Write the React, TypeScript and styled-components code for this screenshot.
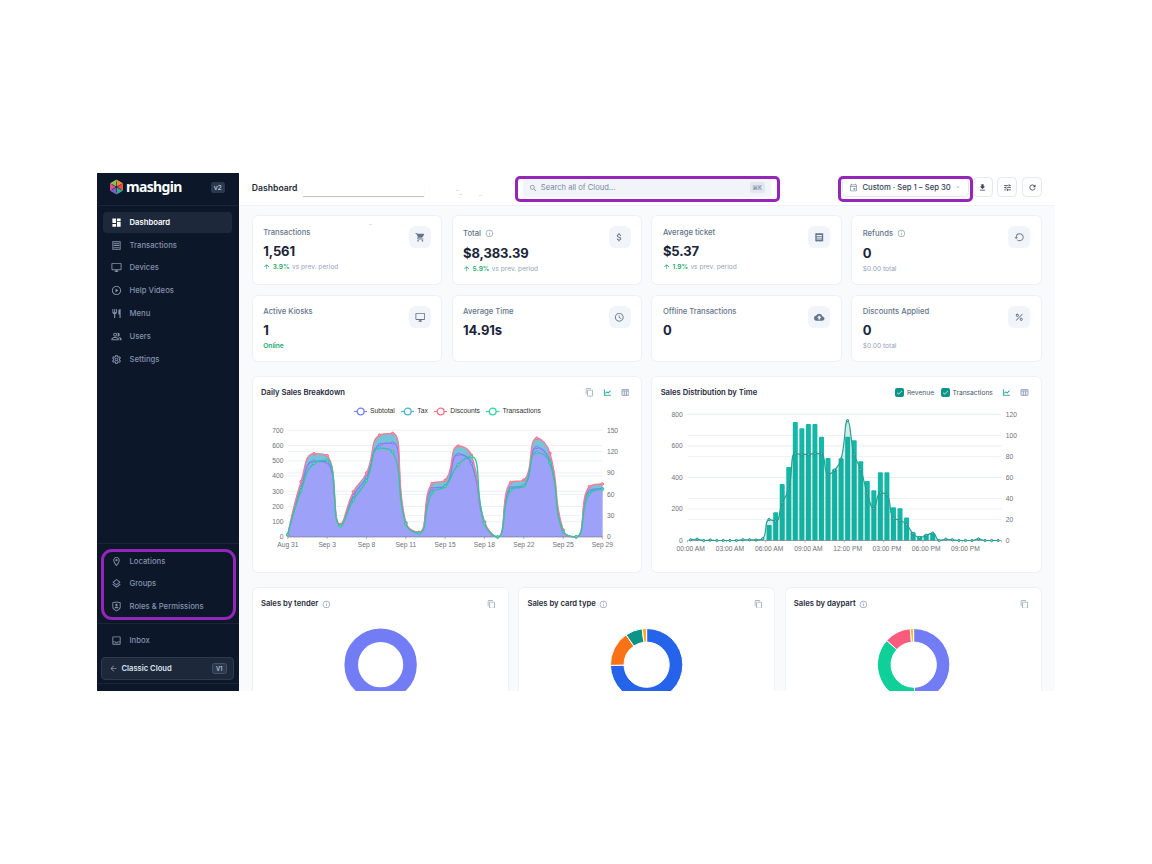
import React from "react";
import styled, { createGlobalStyle, css } from "styled-components";
import {
  MdAccessTime,
  MdArrowBack,
  MdArrowUpward,
  MdAttachMoney,
  MdCheck,
  MdCloudUpload,
  MdContentCopy,
  MdDashboard,
  MdDownload,
  MdExpandMore,
  MdInfoOutline,
  MdOutlineDesktopWindows,
  MdOutlineEvent,
  MdOutlineInbox,
  MdOutlineLayers,
  MdOutlineLocationOn,
  MdOutlinePeopleAlt,
  MdOutlineReceipt,
  MdOutlineSettings,
  MdPercent,
  MdPlayCircleOutline,
  MdReceipt,
  MdRefresh,
  MdRestaurant,
  MdSearch,
  MdShoppingCart,
  MdTune,
} from "react-icons/md";
import { RiShieldUserLine } from "react-icons/ri";
import { AiOutlineLineChart } from "react-icons/ai";

const GlobalStyle = createGlobalStyle`
  * { box-sizing: border-box; }
  body {
    margin: 0;
    background: #fff;
    font-family: Inter, "Liberation Sans", sans-serif;
    color: #1e293b;
  }
`;

const Page = styled.div`
  width: 1152px;
  height: 864px;
  padding: 173px 97px;
  overflow: hidden;
`;

const Window = styled.div`
  position: relative;
  display: flex;
  width: 958px;
  height: 518px;
  overflow: hidden;
  background: #f8fafc;
`;

/* ---------- sidebar ---------- */

const Sidebar = styled.aside`
  flex: none;
  display: flex;
  flex-direction: column;
  width: 141.5px;
  background: #0d172a;
  color: #8493aa;
`;

const Brand = styled.div`
  display: flex;
  align-items: center;
  height: 32.5px;
  padding: 0 13.5px 3.5px 12px;
  border-bottom: 1px solid #1a2538;
`;

const Wordmark = styled.span`
  flex: 1;
  margin-left: 2px;
  font: 700 14px/16px "Noto Sans", "Open Sans", sans-serif;
  letter-spacing: -0.65px;
  color: #fff;
`;

const VersionTag = styled.span<{ $small?: boolean }>`
  display: grid;
  place-items: center;
  width: 14.5px;
  height: 11px;
  border-radius: 2.5px;
  background: #2b394e;
  color: #b3c0d1;
  font-size: 6.8px;
  font-weight: 600;
  ${(p) =>
    p.$small &&
    css`
      border: 0.5px solid #42506a;
      font-size: 5.8px;
    `}
`;

const NavGroup = styled.nav<{ $top: number; $line?: boolean; $gap?: number; $bottom?: number }>`
  display: flex;
  flex-direction: column;
  gap: ${(p) => p.$gap ?? 2.3}px;
  padding: ${(p) => p.$top}px 7px ${(p) => p.$bottom ?? 0}px 6px;
  ${(p) => p.$line && "border-top: 1px solid #1a2538;"}
`;

const NavItem = styled.a<{ $active?: boolean }>`
  display: flex;
  align-items: center;
  gap: 7.5px;
  height: 20.5px;
  padding-left: 8px;
  border-radius: 4px;
  font-size: 7.7px;
  font-weight: ${(p) => (p.$active ? 600 : 500)};
  color: ${(p) => (p.$active ? "#fff" : "inherit")};
  background: ${(p) => (p.$active ? "#1d293b" : "transparent")};
  svg { width: 11px; height: 11px; }
`;

const Spacer = styled.div`
  flex: 1;
`;

const ClassicButton = styled.div`
  display: flex;
  align-items: center;
  height: 23px;
  margin: 6.3px 4.5px 2.5px 4px;
  padding: 0 6.5px 0 7px;
  border: 1px solid #2d3a4f;
  border-radius: 4px;
  background: #1d293b;
  font-size: 7.6px;
  font-weight: 600;
  color: #dbe3ec;
  svg { flex: none; width: 9px; height: 9px; color: #8493aa; margin-right: 3.5px; }
  span { margin-left: auto; }
`;

const SidebarFoot = styled.div`
  height: 8.5px;
  border-top: 1px solid #1a2538;
`;

/* ---------- top bar ---------- */

const Main = styled.main`
  flex: 1;
  min-width: 0;
`;

const TopBar = styled.header`
  display: flex;
  align-items: center;
  height: 33px;
  padding: 0 13px 3.5px 13.3px;
  background: #fff;
  border-bottom: 1px solid #eff2f6;
`;

const PageTitle = styled.h1`
  margin: 1px 0 0;
  width: 51.2px;
  font-size: 8.65px;
  line-height: 12px;
  font-weight: 600;
`;

const LocationField = styled.div`
  width: 121px;
  height: 13px;
  margin: 6px 99px 0 0;
  background: #fff;
  border-bottom: 1px solid #c4c4c4;
  box-shadow: 0 0 1px #ddd;
  clip-path: inset(2px -1px -1px -1px);
`;

const SearchBox = styled.div`
  display: flex;
  align-items: center;
  width: 248px;
  height: 20px;
  margin-right: 71px;
  padding: 1px 6px 0;
  border-radius: 4px;
  background: #f1f5f9;
  color: #7a899e;
  font-size: 7.6px;
  svg { width: 8.5px; height: 8.5px; margin-right: 3.5px; }
`;

const Shortcut = styled.kbd`
  display: grid;
  place-items: center;
  width: 15px;
  height: 11px;
  margin-left: auto;
  border-radius: 2.5px;
  background: #e0e7ef;
  font: 500 5.8px Inter, sans-serif;
`;

const DateButton = styled.div`
  display: flex;
  align-items: center;
  width: 127px;
  height: 20px;
  margin-right: 4.2px;
  padding: 0 6.5px;
  border: 1px solid #e2e8f0;
  border-radius: 4.5px;
  font-size: 7.7px;
  font-weight: 500;
  white-space: nowrap;
  color: #334155;
  svg { flex: none; width: 9px; height: 9px; margin-right: 4.3px; color: #8493aa; }
  svg:last-child { width: 6px; height: 6px; margin: 0 0 0 4px; }
`;

const IconButton = styled.button`
  display: grid;
  place-items: center;
  width: 20px;
  height: 20px;
  margin-right: 4.7px;
  padding: 0;
  border: 1px solid #e2e8f0;
  border-radius: 4.5px;
  background: #fff;
  color: #334155;
  &:last-child { margin-right: 0; }
  svg { width: 9px; height: 9px; }
`;

/* ---------- cards ---------- */

const Content = styled.div`
  padding: 9px 13.4px 0 13.2px;
`;

const Grid = styled.section<{ $cols: number; $rows: string; $bottom: number }>`
  display: grid;
  grid-template-columns: repeat(${(p) => p.$cols}, 1fr);
  grid-template-rows: ${(p) => p.$rows};
  gap: 9.4px;
  margin-bottom: ${(p) => p.$bottom}px;
`;

const Card = styled.article`
  min-width: 0;
  border-radius: 6px;
  background: #fff;
  box-shadow: inset 0 0 0 1px #edf1f6;
`;

const StatCard = styled(Card)`
  display: flex;
  justify-content: space-between;
  padding: 11px 11.3px 0 11.6px;
`;

const StatLabel = styled.div<{ $tall?: boolean }>`
  display: flex;
  align-items: center;
  gap: 4px;
  height: ${(p) => (p.$tall ? 14 : 12)}px;
  font-size: 7.65px;
  font-weight: 500;
  color: #64748b;
  svg { width: 8.8px; height: 8.8px; color: #94a3b8; }
`;

const StatValue = styled.div`
  height: 19px;
  margin-top: 3.7px;
  font-size: 13px;
  line-height: 19px;
  font-weight: 700;
  letter-spacing: -0.12px;
  color: #1b2438;
`;

const StatNote = styled.div<{ $good?: boolean }>`
  display: flex;
  align-items: center;
  height: 12px;
  font-size: 6.6px;
  font-weight: ${(p) => (p.$good ? 600 : 400)};
  color: ${(p) => (p.$good ? "#22a86b" : "#94a3b8")};
  svg { width: 7.5px; height: 7.5px; margin-right: 2px; color: #22a86b; }
  b { font-weight: 600; margin-right: 2.3px; color: #22a86b; }
`;

const StatIcon = styled.div`
  display: grid;
  place-items: center;
  width: 22px;
  height: 22px;
  border-radius: 6px;
  background: #f1f5f9;
  color: #64748b;
  svg { width: 10.5px; height: 10.5px; }
`;

const CardHead = styled.div<{ $gap?: number }>`
  display: flex;
  align-items: center;
  height: 14px;
  margin: 9.8px 12.5px ${(p) => p.$gap ?? 0}px 9.3px;
`;

const CardTitle = styled.h2`
  display: flex;
  align-items: center;
  gap: 3.5px;
  margin: 0 auto 0 0;
  font-size: 7.67px;
  font-weight: 600;
  color: #1e293b;
  svg { width: 8.8px; height: 8.8px; color: #94a3b8; }
`;

const HeadIcon = styled.span<{ $on?: boolean; $left?: number }>`
  display: flex;
  margin-left: ${(p) => p.$left ?? 9}px;
  color: ${(p) => (p.$on ? "#0d9488" : "#94a3b8")};
  svg { width: 8.9px; height: 8.9px; }
  ${(p) => p.$on && "path { stroke: #0d9488; stroke-width: 26; }"}
`;

const Toggle = styled.label`
  display: flex;
  align-items: center;
  gap: 3px;
  margin-right: 6.5px;
  font-size: 6.65px;
  color: #475569;
`;

const CheckBox = styled.span`
  display: grid;
  place-items: center;
  width: 9px;
  height: 9px;
  border-radius: 2px;
  background: #0d9488;
  color: #fff;
  svg { width: 7px; height: 7px; }
`;

const Legend = styled.div`
  display: flex;
  justify-content: center;
  gap: 6.3px;
  height: 12px;
  margin: 5.6px 0 5px;
  padding-left: 1px;
  font: 6.75px/12px "Liberation Sans", sans-serif;
  color: #333;
`;

const LegendItem = styled.span`
  display: flex;
  align-items: center;
  gap: 2.8px;
`;

const Plot = styled.svg`
  display: block;
  width: 100%;
  overflow: visible;
  text {
    font: 6.7px "Liberation Sans", sans-serif;
    fill: #6e7079;
  }
`;

/* ---------- annotation marks ---------- */

const Highlight = styled.div<{ $x: number; $y: number; $w: number; $h: number; $r: number }>`
  position: absolute;
  left: ${(p) => p.$x}px;
  top: ${(p) => p.$y}px;
  width: ${(p) => p.$w}px;
  height: ${(p) => p.$h}px;
  border: 3px solid #9427b9;
  border-radius: ${(p) => p.$r}px;
`;

const Speck = styled.i<{ $x: number; $y: number }>`
  position: absolute;
  left: ${(p) => p.$x}px;
  top: ${(p) => p.$y}px;
  width: 2.5px;
  height: 1px;
  background: #e2e2e2;
`;

/* ---------- chart helpers ---------- */

type Pt = [number, number];

/** Cubic smoothing whose control points never overshoot the neighbouring points. */
function smoothPath(pts: Pt[], smooth = 0.5): string {
  const between = (v: number, a: number, b: number) =>
    Math.max(Math.min(a, b), Math.min(Math.max(a, b), v));
  let d = `M${pts[0][0]} ${pts[0][1]}`;
  let c0: Pt = pts[0];
  for (let i = 1; i < pts.length; i++) {
    const prev = pts[i - 1];
    const cur = pts[i];
    const next = pts[i + 1];
    let c1: Pt = cur;
    let nextC: Pt = cur;
    if (next) {
      const lp = Math.hypot(cur[0] - prev[0], cur[1] - prev[1]);
      const ln = Math.hypot(next[0] - cur[0], next[1] - cur[1]);
      const vx = next[0] - prev[0];
      const vy = next[1] - prev[1];
      const r = ln / (ln + lp);
      const nx = between(cur[0] + vx * smooth * r, cur[0], next[0]);
      const ny = between(cur[1] + vy * smooth * r, cur[1], next[1]);
      c1 = [
        between(cur[0] - ((nx - cur[0]) * lp) / ln, prev[0], cur[0]),
        between(cur[1] - ((ny - cur[1]) * lp) / ln, prev[1], cur[1]),
      ];
      nextC = [cur[0] + ((cur[0] - c1[0]) * ln) / lp, cur[1] + ((cur[1] - c1[1]) * ln) / lp];
    }
    d += `C${c0[0].toFixed(2)} ${c0[1].toFixed(2)} ${c1[0].toFixed(2)} ${c1[1].toFixed(2)} ${cur[0].toFixed(2)} ${cur[1].toFixed(2)}`;
    c0 = nextC;
  }
  return d;
}

const DAILY = {
  total: [12, 363, 547, 534, 82, 297, 420, 669, 680, 96, 31, 350, 372, 597, 538, 101, 0, 357, 374, 648, 549, 46, 0, 330, 348],
  subtotal: [11, 326, 497, 488, 77, 271, 392, 606, 617, 90, 28, 317, 335, 543, 484, 94, 0, 322, 337, 588, 499, 42, 0, 302, 317],
  count: [4, 65, 103.5, 108, 15.5, 52, 79, 125, 119.5, 18.5, 5.6, 62, 71, 102, 113, 18.8, 0, 66, 72, 119, 104, 7.5, 0.5, 60.5, 67],
};
const DAYS = ["Aug 31", "Sep 3", "Sep 8", "Sep 11", "Sep 15", "Sep 18", "Sep 22", "Sep 25", "Sep 29"];

function DailyChart() {
  const L = 35.7, R = 350.3, T = 8.3, B = 115;
  const step = (R - L) / 24;
  const toPts = (vals: number[], max: number): Pt[] =>
    vals.map((v, i) => [L + i * step, B - (v / max) * (B - T)]);
  const total = toPts(DAILY.total, 700);
  const sub = toPts(DAILY.subtotal, 700);
  const count = toPts(DAILY.count, 150);
  const totalD = smoothPath(total);
  const subD = smoothPath(sub);
  const close = `L${R} ${B}L${L} ${B}Z`;
  const dots = (pts: Pt[], color: string, fill: string) =>
    pts.map(([x, y], i) => <circle key={i} cx={x} cy={y} r={1.25} fill={fill} stroke={color} strokeWidth={1} />);
  return (
    <Plot viewBox="0 0 390 130" height={130}>
      {[1, 2, 3, 4, 5, 6, 7].map((n) => (
        <line key={n} x1={L} x2={R} y1={B - ((B - T) * n) / 7} y2={B - ((B - T) * n) / 7} stroke="#e6ebf4" strokeWidth={0.8} />
      ))}
      {[1, 2, 3, 4].map((n) => (
        <line key={n} x1={L} x2={R} y1={B - ((B - T) * n) / 5} y2={B - ((B - T) * n) / 5} stroke="#e6ebf4" strokeWidth={0.8} />
      ))}
      <path d={totalD + close} fill="#79c3da" />
      <path d={subD + close} fill="#9da2f8" />
      <line x1={L} x2={R} y1={B} y2={B} stroke="#6e7079" strokeWidth={0.6} />
      {DAYS.map((_, i) => (
        <line key={i} x1={L + i * 3 * step} x2={L + i * 3 * step} y1={B} y2={B + 2} stroke="#6e7079" strokeWidth={0.5} />
      ))}
      <path d={subD} fill="none" stroke="#7a80f7" strokeWidth={1.3} />
      {dots(sub, "#7a80f7", "#a9adfa")}
      <path d={totalD} fill="none" stroke="#f47c94" strokeWidth={1.35} />
      {dots(total, "#f8718b", "#f99aad")}
      <path d={smoothPath(count)} fill="none" stroke="#2cc79f" strokeWidth={1.35} />
      {dots(count, "#24c99a", "#74dfc0")}
      {[0, 1, 2, 3, 4, 5, 6, 7].map((n) => (
        <text key={n} x={L - 4.3} y={B - ((B - T) * n) / 7 + 2.3} textAnchor="end">{n * 100}</text>
      ))}
      {[0, 1, 2, 3, 4, 5].map((n) => (
        <text key={n} x={R + 4.5} y={B - ((B - T) * n) / 5 + 2.3}>{n * 30}</text>
      ))}
      {DAYS.map((t, i) => (
        <text key={t} x={L + i * 3 * step} y={B + 10.3} textAnchor="middle">{t}</text>
      ))}
    </Plot>
  );
}

const REVENUE = [98, 180, 359, 467, 752, 712, 739, 739, 659, 524, 452, 520, 659, 636, 503, 378, 319, 433, 433, 211, 205, 146, 53, 28, 38, 46];
const TXNS = [
  0.7, 1.2, 0, 0.4, 0, 0, 0, 0, 0.7, 0.7, 0.4, 1.6, 20, 18.4, 36, 49, 83, 82, 82, 83, 82.5, 63, 67, 77.6, 114,
  81.6, 67.6, 45, 30.5, 45.4, 43.5, 21, 19.3, 15.2, 6.7, 2.9, 5, 7, 0, 1.2, 0.7, 0, 0, 0, 1.5, 0, 0, 0,
];
const HOURS = ["00:00 AM", "03:00 AM", "06:00 AM", "09:00 AM", "12:00 PM", "03:00 PM", "06:00 PM", "09:00 PM"];

function TimeChart() {
  const L = 36.2, R = 350.3, T = 9.4, B = 135.5;
  const band = (R - L) / 48;
  const cx = (i: number) => L + band * (i + 0.5);
  const pts: Pt[] = TXNS.map((v, i) => [cx(i), B - (v / 120) * (B - T)]);
  const d = smoothPath(pts);
  return (
    <Plot viewBox="0 0 390 150" height={150}>
      {[1, 2, 3, 4].map((n) => (
        <line key={n} x1={L} x2={R} y1={B - ((B - T) * n) / 4} y2={B - ((B - T) * n) / 4} stroke="#e4e9f1" strokeWidth={0.8} />
      ))}
      {[1, 2, 3, 4, 5].map((n) => (
        <line key={n} x1={L} x2={R} y1={B - ((B - T) * n) / 6} y2={B - ((B - T) * n) / 6} stroke="#e9edf6" strokeWidth={0.8} />
      ))}
      {REVENUE.map((v, i) => {
        const h = (v / 800) * (B - T);
        return (
          <path
            key={i}
            d={`M${cx(i + 12) - 2.5} ${B}v${-(h - 1)}q0 -1 1 -1h3q1 0 1 1v${h - 1}z`}
            fill="#14b8a6"
          />
        );
      })}
      <path d={`${d}L${cx(47)} ${B}L${cx(0)} ${B}Z`} fill="#0d9488" fillOpacity={0.18} />
      <line x1={L} x2={R} y1={B} y2={B} stroke="#6e7079" strokeWidth={0.6} />
      {[0, 6, 12, 18, 24, 30, 36, 42, 48].map((n) => (
        <line key={n} x1={L + n * band} x2={L + n * band} y1={B} y2={B + 2} stroke="#6e7079" strokeWidth={0.5} />
      ))}
      <path d={d} fill="none" stroke="#27a093" strokeWidth={1.2} />
      {pts.map(([x, y], i) => (
        <circle key={i} cx={x} cy={y} r={1.15} fill="#8fd3cb" stroke="#128f83" strokeWidth={0.9} />
      ))}
      {[0, 1, 2, 3, 4].map((n) => (
        <text key={n} x={L - 4.6} y={B - ((B - T) * n) / 4 + 2.3} textAnchor="end">{n * 200}</text>
      ))}
      {[0, 1, 2, 3, 4, 5, 6].map((n) => (
        <text key={n} x={R + 4.3} y={B - ((B - T) * n) / 6 + 2.3}>{n * 20}</text>
      ))}
      {HOURS.map((t, i) => (
        <text key={t} x={cx(i * 6)} y={B + 10} textAnchor="middle">{t}</text>
      ))}
    </Plot>
  );
}

type Slice = { from: number; to: number; color: string };

function Donut({ slices }: { slices: Slice[] }) {
  const cx = 128.6, cy = 53.7, r0 = 22.6, r1 = 36.2;
  const at = (r: number, deg: number) => {
    const a = (deg * Math.PI) / 180;
    return `${(cx + r * Math.sin(a)).toFixed(2)} ${(cy - r * Math.cos(a)).toFixed(2)}`;
  };
  return (
    <Plot viewBox="0 0 257 92" height={92}>
      {slices.length === 1 ? (
        <circle cx={cx} cy={cy} r={(r0 + r1) / 2} fill="none" stroke={slices[0].color} strokeWidth={r1 - r0} />
      ) : (
        slices.map((s) => {
          const big = s.to - s.from > 180 ? 1 : 0;
          return (
            <path
              key={s.color}
              d={`M${at(r1, s.from)}A${r1} ${r1} 0 ${big} 1 ${at(r1, s.to)}L${at(r0, s.to)}A${r0} ${r0} 0 ${big} 0 ${at(r0, s.from)}Z`}
              fill={s.color}
              stroke="#fff"
              strokeWidth={1}
              strokeLinejoin="round"
            />
          );
        })
      )}
    </Plot>
  );
}

function CubeLogo() {
  return (
    <svg width="15" height="16" viewBox="0 0 30 32">
      <path d="M15 1 28 8.5 15 16z" fill="#f0883a" />
      <path d="M15 1 2 8.5 15 16z" fill="#8cc152" />
      <path d="M2 8.5 2 23.5 15 16z" fill="#e0508f" />
      <path d="M28 8.5 28 23.5 15 16z" fill="#e9503f" />
      <path d="M2 23.5 15 31 15 16z" fill="#7d5fc4" />
      <path d="M28 23.5 15 31 15 16z" fill="#35a98f" />
      <path d="M15 16V6M15 16 6 11M15 16 24 11M15 16V26M15 16 6 21M15 16 24 21" stroke="#1d2a44" strokeWidth="1.1" />
      <circle cx="15" cy="16" r="2" fill="#1d2a44" />
    </svg>
  );
}

function TableIcon() {
  return (
    <svg viewBox="0 0 24 24" fill="none" stroke="currentColor" strokeWidth="2.4">
      <rect x="2.5" y="4" width="19" height="16" rx="1" fill="currentColor" fillOpacity="0.2" />
      <path d="M3 8h18M9 8v12M15 8v12" />
    </svg>
  );
}

function RefundIcon() {
  return (
    <svg viewBox="0 0 24 24" fill="currentColor">
      <path d="M13 3a9 9 0 0 0-9 9H1l4 4 4-4H6a7 7 0 1 1 2.06 4.94l-1.42 1.42A9 9 0 1 0 13 3z" />
    </svg>
  );
}

const NAV = [
  { label: "Dashboard", icon: <MdDashboard /> },
  { label: "Transactions", icon: <MdOutlineReceipt /> },
  { label: "Devices", icon: <MdOutlineDesktopWindows /> },
  { label: "Help Videos", icon: <MdPlayCircleOutline /> },
  { label: "Menu", icon: <MdRestaurant /> },
  { label: "Users", icon: <MdOutlinePeopleAlt /> },
  { label: "Settings", icon: <MdOutlineSettings /> },
];

const ADMIN = [
  { label: "Locations", icon: <MdOutlineLocationOn /> },
  { label: "Groups", icon: <MdOutlineLayers /> },
  { label: "Roles & Permissions", icon: <RiShieldUserLine /> },
];

type Stat = {
  label: string;
  value: string;
  icon: React.ReactNode;
  info?: boolean;
  change?: string;
  note?: string;
  good?: boolean;
};

const STATS: Stat[] = [
  { label: "Transactions", value: "1,561", change: "3.9%", icon: <MdShoppingCart /> },
  { label: "Total", value: "$8,383.39", change: "5.9%", info: true, icon: <MdAttachMoney /> },
  { label: "Average ticket", value: "$5.37", change: "1.9%", icon: <MdReceipt /> },
  { label: "Refunds", value: "0", note: "$0.00 total", info: true, icon: <RefundIcon /> },
  { label: "Active Kiosks", value: "1", note: "Online", good: true, icon: <MdOutlineDesktopWindows /> },
  { label: "Average Time", value: "14.91s", icon: <MdAccessTime /> },
  { label: "Offline Transactions", value: "0", icon: <MdCloudUpload /> },
  { label: "Discounts Applied", value: "0", note: "$0.00 total", icon: <MdPercent /> },
];

const LEGEND = [
  { label: "Subtotal", color: "#7a80f7" },
  { label: "Tax", color: "#4fb3d1" },
  { label: "Discounts", color: "#f8718b" },
  { label: "Transactions", color: "#2fd6a0" },
];

const DONUTS: { title: string; slices: Slice[] }[] = [
  { title: "Sales by tender", slices: [{ from: 0, to: 360, color: "#727cf5" }] },
  {
    title: "Sales by card type",
    slices: [
      { from: 0, to: 269, color: "#2563eb" },
      { from: 269, to: 325.5, color: "#f97316" },
      { from: 325.5, to: 353, color: "#0d9488" },
      { from: 353, to: 360, color: "#fbb024" },
    ],
  },
  {
    title: "Sales by daypart",
    slices: [
      { from: 0, to: 178, color: "#727cf5" },
      { from: 178, to: 312, color: "#10d09a" },
      { from: 312, to: 354.5, color: "#fb5b7c" },
      { from: 354.5, to: 360, color: "#fbc024" },
    ],
  },
];

export default function App() {
  return (
    <>
      <GlobalStyle />
      <Page>
        <Window>
          <Sidebar>
            <Brand>
              <CubeLogo />
              <Wordmark>mashgin</Wordmark>
              <VersionTag>v2</VersionTag>
            </Brand>
            <NavGroup $top={6.5}>
              {NAV.map((n, i) => (
                <NavItem key={n.label} $active={i === 0}>
                  {n.icon}
                  {n.label}
                </NavItem>
              ))}
            </NavGroup>
            <Spacer />
            <NavGroup $top={6.7} $bottom={6.3} $gap={2} $line>
              {ADMIN.map((n) => (
                <NavItem key={n.label}>
                  {n.icon}
                  {n.label}
                </NavItem>
              ))}
            </NavGroup>
            <NavGroup $top={6.5} $line>
              <NavItem>
                <MdOutlineInbox />
                Inbox
              </NavItem>
            </NavGroup>
            <ClassicButton>
              <MdArrowBack />
              Classic Cloud
              <VersionTag $small>V1</VersionTag>
            </ClassicButton>
            <SidebarFoot />
          </Sidebar>

          <Main>
            <TopBar>
              <PageTitle>Dashboard</PageTitle>
              <LocationField />
              <SearchBox>
                <MdSearch />
                Search all of Cloud...
                <Shortcut>⌘K</Shortcut>
              </SearchBox>
              <DateButton>
                <MdOutlineEvent />
                Custom · Sep 1 – Sep 30
                <MdExpandMore />
              </DateButton>
              <IconButton><MdDownload /></IconButton>
              <IconButton><MdTune /></IconButton>
              <IconButton><MdRefresh /></IconButton>
            </TopBar>

            <Content>
              <Grid $cols={4} $rows="70.4px 67.3px" $bottom={13.8}>
                {STATS.map((s) => (
                  <StatCard key={s.label}>
                    <div>
                      <StatLabel $tall={s.info}>
                        {s.label}
                        {s.info && <MdInfoOutline />}
                      </StatLabel>
                      <StatValue>{s.value}</StatValue>
                      {s.change && (
                        <StatNote>
                          <MdArrowUpward />
                          <b>{s.change}</b>
                          vs prev. period
                        </StatNote>
                      )}
                      {s.note && <StatNote $good={s.good}>{s.note}</StatNote>}
                    </div>
                    <StatIcon>{s.icon}</StatIcon>
                  </StatCard>
                ))}
              </Grid>

              <Grid $cols={2} $rows="197.4px" $bottom={13.9}>
                <Card>
                  <CardHead>
                    <CardTitle>Daily Sales Breakdown</CardTitle>
                    <HeadIcon><MdContentCopy /></HeadIcon>
                    <HeadIcon $on><AiOutlineLineChart /></HeadIcon>
                    <HeadIcon><TableIcon /></HeadIcon>
                  </CardHead>
                  <Legend>
                    {LEGEND.map((l) => (
                      <LegendItem key={l.label}>
                        <svg width="13.4" height="9" viewBox="0 0 13.4 9">
                          <path d="M0 4.5h13.4" stroke={l.color} strokeWidth="1.2" />
                          <circle cx="6.7" cy="4.5" r="3.4" fill="#fff" stroke={l.color} strokeWidth="1.3" />
                        </svg>
                        {l.label}
                      </LegendItem>
                    ))}
                  </Legend>
                  <DailyChart />
                </Card>
                <Card>
                  <CardHead $gap={5.4}>
                    <CardTitle>Sales Distribution by Time</CardTitle>
                    <Toggle>
                      <CheckBox><MdCheck /></CheckBox>
                      Revenue
                    </Toggle>
                    <Toggle>
                      <CheckBox><MdCheck /></CheckBox>
                      Transactions
                    </Toggle>
                    <HeadIcon $on $left={3}><AiOutlineLineChart /></HeadIcon>
                    <HeadIcon><TableIcon /></HeadIcon>
                  </CardHead>
                  <TimeChart />
                </Card>
              </Grid>

              <Grid $cols={3} $rows="140px" $bottom={0}>
                {DONUTS.map((c) => (
                  <Card key={c.title}>
                    <CardHead>
                      <CardTitle>
                        {c.title}
                        <MdInfoOutline />
                      </CardTitle>
                      <HeadIcon><MdContentCopy /></HeadIcon>
                    </CardHead>
                    <Donut slices={c.slices} />
                  </Card>
                ))}
              </Grid>
            </Content>
          </Main>

          <Speck $x={359} $y={17} />
          <Speck $x={362} $y={21} />
          <Speck $x={382} $y={21.5} />
          <Speck $x={272} $y={50.5} />
          <Highlight $x={4} $y={376} $w={135} $h={71} $r={11} />
          <Highlight $x={418} $y={3} $w={265} $h={26} $r={5} />
          <Highlight $x={741} $y={3} $w={135} $h={26} $r={5} />
        </Window>
      </Page>
    </>
  );
}
